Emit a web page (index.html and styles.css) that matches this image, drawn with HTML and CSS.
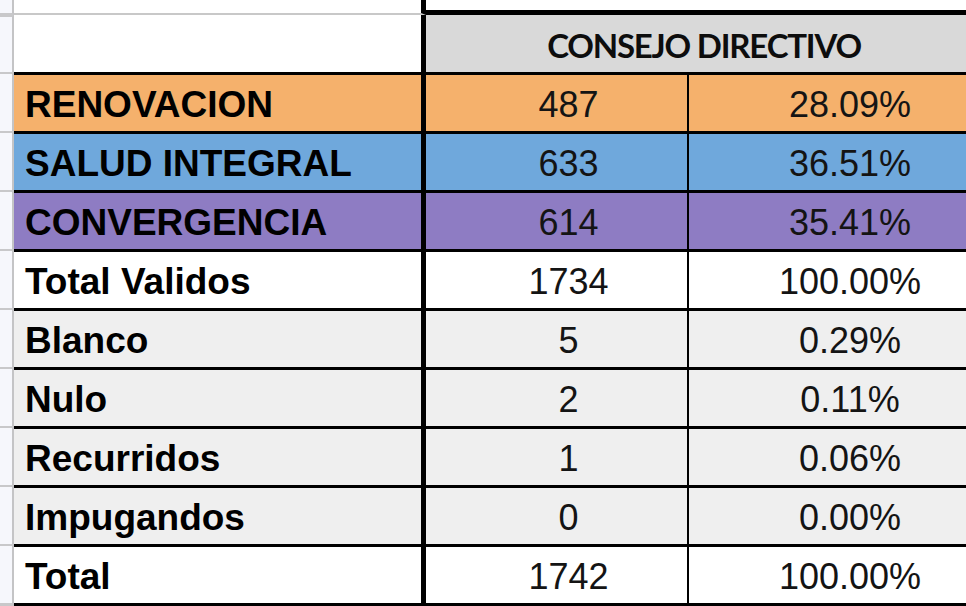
FILE: index.html
```html
<!DOCTYPE html>
<html lang="es">
<head>
<meta charset="utf-8">
<title>Consejo Directivo</title>
<link rel="stylesheet" href="styles.css">
</head>
<body>
<div class="sheet">
  <div class="row row-top">
    <div class="gut gut-top"></div>
    <div class="c1 top-left"></div>
    <div class="top-right"></div>
  </div>
  <div class="row row-head">
    <div class="gut"></div>
    <div class="c1 head-left"></div>
    <div class="head-right">CONSEJO DIRECTIVO</div>
  </div>
  <div class="row data orange">
    <div class="gut"></div>
    <div class="c1 lbl">RENOVACION</div>
    <div class="c2 num">487</div>
    <div class="c3 num">28.09%</div>
  </div>
  <div class="row data blue">
    <div class="gut"></div>
    <div class="c1 lbl">SALUD INTEGRAL</div>
    <div class="c2 num">633</div>
    <div class="c3 num">36.51%</div>
  </div>
  <div class="row data purple">
    <div class="gut"></div>
    <div class="c1 lbl">CONVERGENCIA</div>
    <div class="c2 num">614</div>
    <div class="c3 num">35.41%</div>
  </div>
  <div class="row data white">
    <div class="gut"></div>
    <div class="c1 lbl">Total Validos</div>
    <div class="c2 num">1734</div>
    <div class="c3 num">100.00%</div>
  </div>
  <div class="row data grey">
    <div class="gut"></div>
    <div class="c1 lbl">Blanco</div>
    <div class="c2 num">5</div>
    <div class="c3 num">0.29%</div>
  </div>
  <div class="row data grey">
    <div class="gut"></div>
    <div class="c1 lbl">Nulo</div>
    <div class="c2 num">2</div>
    <div class="c3 num">0.11%</div>
  </div>
  <div class="row data grey">
    <div class="gut"></div>
    <div class="c1 lbl">Recurridos</div>
    <div class="c2 num">1</div>
    <div class="c3 num">0.06%</div>
  </div>
  <div class="row data grey">
    <div class="gut"></div>
    <div class="c1 lbl">Impugandos</div>
    <div class="c2 num">0</div>
    <div class="c3 num">0.00%</div>
  </div>
  <div class="row data white last">
    <div class="gut"></div>
    <div class="c1 lbl">Total</div>
    <div class="c2 num">1742</div>
    <div class="c3 num">100.00%</div>
  </div>
</div>
</body>
</html>
```
FILE: styles.css
```css
html, body {
  margin: 0;
  padding: 0;
  background: #ffffff;
}
body {
  width: 966px;
  height: 606px;
  overflow: hidden;
  font-family: "Liberation Sans", Arial, sans-serif;
  color: #0b0b0b;
}
.sheet {
  width: 966px;
  overflow: hidden;
}
.row {
  display: grid;
  grid-template-columns: 14px 412px 263px 1fr;
}
.gut {
  background: #f6f7fc;
  border-right: 2px solid #c4c4c6;
  border-top: 2px solid #c8c8ca;
}
.gut-top {
  border-top: 0;
  border-bottom: 2px solid #c8c8ca;
  height: 13px;
}
.row-top {
  height: 15px;
}
.top-left {
  height: 13px;
  border-bottom: 2px solid #c8c8c8;
  background: #fff;
}
.top-right {
  grid-column: 3 / 5;
  height: 10px;
  border-bottom: 5px solid #000;
  background: #fff;
}
.c1 {
  border-right: 5px solid #000;
}
.row-head {
  height: 57px;
}
.head-left {
  background: #fff;
}
.head-right {
  grid-column: 3 / 5;
  background: #d9d9d9;
  font-family: Lato, "Open Sans", sans-serif;
  font-weight: 700;
  font-size: 33px;
  letter-spacing: -1.2px;
  color: #0d0d0d;
  display: flex;
  align-items: center;
  justify-content: center;
  padding-left: 16px;
  padding-top: 2px;
}
.data .c1,
.data .c2,
.data .c3 {
  border-top: 3px solid #000;
  height: 53px;
  display: flex;
  align-items: center;
  padding-top: 3px;
}
.data.last .c1,
.data.last .c2,
.data.last .c3 {
  border-bottom: 3px solid #000;
}
.data.last .gut {
  border-bottom: 3px solid #c8c8ca;
}
.lbl {
  font-weight: 700;
  font-size: 37px;
  padding-left: 11px;
  color: #000;
}
.num {
  font-size: 36px;
  justify-content: center;
  color: #141414;
}
.c2 {
  border-right: 2px solid #000;
  padding-left: 24px;
}
.c3 {
  padding-left: 45px;
}
.orange { background: #f5b16c; }
.blue { background: #6fa8dc; }
.purple { background: #8e7cc3; }
.white { background: #ffffff; }
.grey { background: #efefef; }
.row.data .gut { background: #f6f7fc; }
```
